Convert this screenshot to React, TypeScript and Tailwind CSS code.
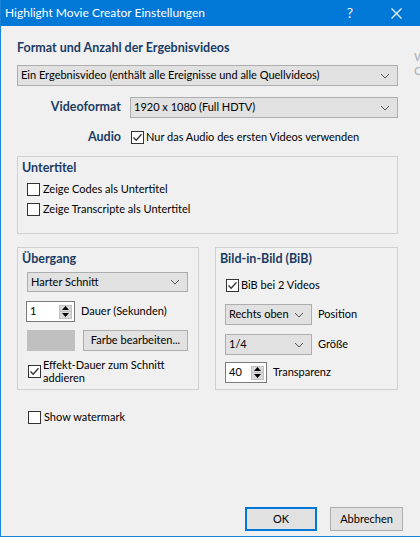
import type { ReactNode } from 'react'

const font = { fontFamily: 'Lato, "Noto Sans", sans-serif' }

function Check({ checked = false }: { checked?: boolean }) {
  return (
    <span className="w-[13px] h-[13px] shrink-0 border border-[#333333] bg-white flex items-center justify-center">
      {checked && (
        <svg width="11" height="11" viewBox="0 0 11 11">
          <path d="M1.5 5.5 L4.2 8.3 L9.5 2.2" fill="none" stroke="#333333" strokeWidth="1.3" />
        </svg>
      )}
    </span>
  )
}

function Chevron() {
  return (
    <svg width="10" height="6" viewBox="0 0 10 6" className="shrink-0">
      <path d="M1 1 L5 5 L9 1" fill="none" stroke="#555555" strokeWidth="1" />
    </svg>
  )
}

function Select({ value, className }: { value: string; className: string }) {
  return (
    <div className={`flex items-center justify-between bg-[#e1e1e1] border border-[#adadad] pl-[3px] pr-[7px] ${className}`}>
      <span className="whitespace-nowrap">{value}</span>
      <Chevron />
    </div>
  )
}

function Spinner({ value, className }: { value: string; className: string }) {
  return (
    <div className={`flex items-center justify-between bg-white border border-[#7a7a7a] pl-[3px] pr-[2px] ${className}`}>
      <span>{value}</span>
      <div className="flex flex-col w-[13px]">
        <span className="h-[7px] bg-[#d9d9d9] border border-[#c0c0c0] flex items-center justify-center">
          <svg width="7" height="4" viewBox="0 0 7 4"><path d="M0 4 L3.5 0 L7 4 Z" fill="#000" /></svg>
        </span>
        <span className="h-[7px] bg-[#d9d9d9] border border-[#c0c0c0] border-t-0 flex items-center justify-center">
          <svg width="7" height="4" viewBox="0 0 7 4"><path d="M0 0 L3.5 4 L7 0 Z" fill="#000" /></svg>
        </span>
      </div>
    </div>
  )
}

function Group({ title, className, children }: { title: string; className: string; children: ReactNode }) {
  return (
    <div className={`border border-[#d0d0d0] ${className}`}>
      <div className="pl-[4px] pt-[3px] h-[19px] leading-[16px] text-[12.5px] font-bold text-[#1a3c64]">{title}</div>
      {children}
    </div>
  )
}

export default function App() {
  return (
    <div style={font} className="relative w-[420px] h-[537px] overflow-hidden bg-[#f0f0f0] border-l border-b border-[#1883d7] text-[11px] text-black flex flex-col">
      <div className="h-[26px] shrink-0 bg-[#0078d7] flex items-center text-white">
        <span className="pl-[4px] text-[12px] leading-none">Highlight Movie Creator Einstellungen</span>
        <span className="ml-auto w-[46px] text-center text-[14px] leading-none">?</span>
        <span className="w-[46px] flex justify-center mr-[1px]">
          <svg width="11" height="11" viewBox="0 0 11 11">
            <path d="M0.5 0.5 L10.5 10.5 M10.5 0.5 L0.5 10.5" stroke="#fff" strokeWidth="1.1" />
          </svg>
        </span>
      </div>

      <span className="absolute left-[413px] top-[51px] h-[12px] text-[12px] text-[#a9b0ba] leading-[12px]">W</span>
      <span className="absolute left-[413px] top-[65px] h-[12px] text-[12px] text-[#a9b0ba] leading-[12px]">C</span>

      <div className="flex-1 flex flex-col pl-[16px] pr-[22px] pt-[14px]">
        <div className="h-[16px] leading-[16px] text-[12.5px] font-bold text-[#1a3c64]">Format und Anzahl der Ergebnisvideos</div>
        <Select value="Ein Ergebnisvideo (enthält alle Ereignisse und alle Quellvideos)" className="mt-[9px] h-[21px]" />

        <div className="mt-[11px] flex items-center">
          <span className="w-[104px] text-right text-[12.5px] font-bold text-[#1a3c64]">Videoformat</span>
          <Select value="1920 x 1080 (Full HDTV)" className="ml-[9px] flex-1 h-[21px]" />
        </div>

        <div className="mt-[12px] h-[15px] flex items-center">
          <span className="w-[104px] text-right text-[12.5px] font-bold text-[#1a3c64]">Audio</span>
          <span className="ml-[10px]"><Check checked /></span>
          <span className="ml-[2px]">Nur das Audio des ersten Videos verwenden</span>
        </div>

        <Group title="Untertitel" className="mt-[11px] h-[78px]">
          <div className="pl-[9px] mt-[6px] flex flex-col gap-[5px]">
            <div className="h-[15px] flex items-center gap-[3px]"><Check /><span>Zeige Codes als Untertitel</span></div>
            <div className="h-[15px] flex items-center gap-[3px]"><Check /><span>Zeige Transcripte als Untertitel</span></div>
          </div>
        </Group>

        <div className="mt-[13px] flex gap-[16px]">
          <Group title="Übergang" className="w-[182px] h-[143px]">
            <div className="pl-[9px] pr-[10px] flex flex-col">
              <Select value="Harter Schnitt" className="mt-[5px] h-[20px]" />
              <div className="mt-[9px] flex items-center">
                <Spinner value="1" className="w-[49px] h-[21px] -ml-[1px]" />
                <span className="ml-[6px]">Dauer (Sekunden)</span>
              </div>
              <div className="mt-[8px] flex items-center h-[21px]">
                <span className="w-[48px] h-[21px] bg-[#c0c0c0]" />
                <span className="ml-[8px] flex-1 h-[21px] bg-[#e1e1e1] border border-[#adadad] flex items-center justify-center whitespace-nowrap">Farbe bearbeiten...</span>
              </div>
              <div className="mt-[7px] flex items-center gap-[2px] pl-[1px]">
                <Check checked />
                <span className="leading-[13px]">Effekt-Dauer zum Schnitt<br />addieren</span>
              </div>
            </div>
          </Group>

          <Group title="Bild-in-Bild (BiB)" className="w-[183px] h-[143px]">
            <div className="pl-[9px] flex flex-col">
              <div className="mt-[11px] h-[15px] flex items-center gap-[2px] pl-[1px]">
                <Check checked /><span>BiB bei 2 Videos</span>
              </div>
              <div className="mt-[11px] flex items-center">
                <Select value="Rechts oben" className="w-[87px] h-[21px]" />
                <span className="ml-[6px]">Position</span>
              </div>
              <div className="mt-[9px] flex items-center">
                <Select value="1/4" className="w-[87px] h-[21px]" />
                <span className="ml-[6px]">Größe</span>
              </div>
              <div className="mt-[7px] flex items-center">
                <Spinner value="40" className="w-[42px] h-[21px]" />
                <span className="ml-[6px]">Transparenz</span>
              </div>
            </div>
          </Group>
        </div>

        <div className="mt-[20px] h-[15px] flex items-center gap-[3px] pl-[11px]">
          <Check /><span>Show watermark</span>
        </div>

        <div className="mt-auto mb-[5px] flex justify-end gap-[13px] -mr-[5px]">
          <button className="w-[72px] h-[24px] bg-[#e1e1e1] border-2 border-[#0078d7]">OK</button>
          <button className="w-[73px] h-[24px] bg-[#e1e1e1] border border-[#adadad]">Abbrechen</button>
        </div>
      </div>
    </div>
  )
}
